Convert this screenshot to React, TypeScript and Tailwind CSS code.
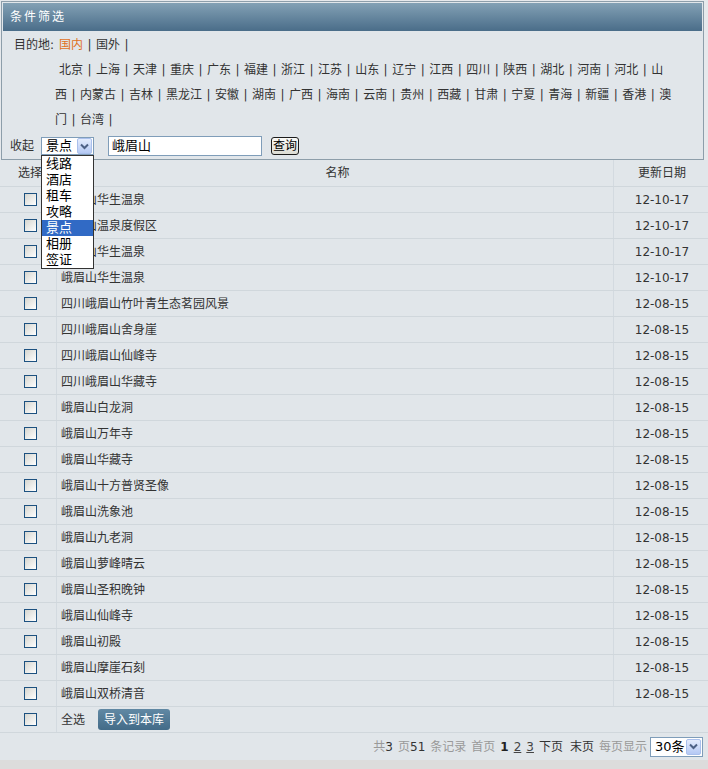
import React from "react";

const provinces = [
  "北京", "上海", "天津", "重庆", "广东", "福建", "浙江", "江苏", "山东", "辽宁", "江西", "四川",
  "陕西", "湖北", "河南", "河北", "山西", "内蒙古", "吉林", "黑龙江", "安徽", "湖南", "广西", "海南",
  "云南", "贵州", "西藏", "甘肃", "宁夏", "青海", "新疆", "香港", "澳门", "台湾",
];

const rows: [string, string][] = [
  ["峨眉山华生温泉", "12-10-17"],
  ["峨眉山温泉度假区", "12-10-17"],
  ["峨眉山华生温泉", "12-10-17"],
  ["峨眉山华生温泉", "12-10-17"],
  ["四川峨眉山竹叶青生态茗园风景", "12-08-15"],
  ["四川峨眉山舍身崖", "12-08-15"],
  ["四川峨眉山仙峰寺", "12-08-15"],
  ["四川峨眉山华藏寺", "12-08-15"],
  ["峨眉山白龙洞", "12-08-15"],
  ["峨眉山万年寺", "12-08-15"],
  ["峨眉山华藏寺", "12-08-15"],
  ["峨眉山十方普贤圣像", "12-08-15"],
  ["峨眉山洗象池", "12-08-15"],
  ["峨眉山九老洞", "12-08-15"],
  ["峨眉山萝峰晴云", "12-08-15"],
  ["峨眉山圣积晚钟", "12-08-15"],
  ["峨眉山仙峰寺", "12-08-15"],
  ["峨眉山初殿", "12-08-15"],
  ["峨眉山摩崖石刻", "12-08-15"],
  ["峨眉山双桥清音", "12-08-15"],
];

const options = ["线路", "酒店", "租车", "攻略", "景点", "相册", "签证"];

const Sep = () => <span className="inline-block w-[13px] text-center indent-0">|</span>;

const Checkbox = () => (
  <span className="block w-[13px] h-[13px] border border-[#1c5180] bg-linear-to-br from-[#d6d6d0] to-white" />
);

const Arrow = () => (
  <span className="flex items-center justify-center w-[15px] h-[16px] rounded-[2px] border border-[#aac0ec] bg-linear-to-b from-[#e4ecfd] to-[#b5c9f4]">
    <svg width="9" height="7" viewBox="0 0 9 7">
      <path d="M1 1.5 L4.5 5 L8 1.5" fill="none" stroke="#4d6185" strokeWidth="2" />
    </svg>
  </span>
);

export default function App() {
  return (
    <div
      className="w-[708px] h-[769px] bg-[#e6e9ec] text-[12px] text-[#333] overflow-hidden"
      style={{ fontFamily: '"DejaVu Sans", "Noto Sans CJK SC", sans-serif' }}
    >
      <div className="pt-px">
        {/* filter panel */}
        <div className="ml-px w-[703px] border border-[#8d9eaa] bg-[#e1e6ea]">
          <div className="m-px mb-0 h-[28px] flex items-center pl-[7px] text-white tracking-[2px] bg-linear-to-b from-[#83a1b5] to-[#4a6d89]">
            条件筛选
          </div>
          <div className="mt-[2px] h-[25px] leading-[25px] pl-[12px] whitespace-nowrap">
            <span className="inline-block w-[45px]">目的地:</span>
            <span className="text-[#e0701c]">国内</span>
            <Sep />
            <span>国外</span>
            <Sep />
          </div>
          <div className="ml-[53px] w-[617px] leading-[25px] indent-[4px]">
            {provinces.map((p) => (
              <React.Fragment key={p}>
                <span>{p}</span>
                <Sep />
              </React.Fragment>
            ))}
          </div>
          <div className="h-[26px] flex items-center pl-[8px]">
            <span>收起</span>
            <div className="relative ml-[7px] w-[53px] h-[18px] border border-[#7f9db9] bg-white flex items-center justify-between pl-[4px] pr-px text-[13px] text-black">
              <span>景点</span>
              <Arrow />
              <div className="absolute left-[-1px] top-[17px] z-10 w-[53px] border border-[#333] bg-white text-[13px] text-black">
                {options.map((o) => (
                  <div
                    key={o}
                    className={
                      o === "景点"
                        ? "h-[16px] leading-[16px] pl-[4px] bg-[#316ac5] text-white"
                        : "h-[16px] leading-[16px] pl-[4px]"
                    }
                  >
                    {o}
                  </div>
                ))}
              </div>
            </div>
            <div className="ml-[14px] w-[154px] h-[20px] border border-[#7f9db9] bg-white flex items-center pl-[3px] text-[13px] text-black">
              峨眉山
            </div>
            <button className="ml-[9px] w-[28px] h-[18px] p-0 rounded-[3px] border border-[#1c1c1c] bg-linear-to-b from-[#fbfbf8] to-[#dcdcd4] text-[12px] leading-none text-black whitespace-nowrap flex items-center justify-center">
              查询
            </button>
          </div>
        </div>

        {/* list */}
        <div className="bg-[#e1e6ea]">
          <div className="grid grid-cols-[57px_557px_94px] h-[27px] border-b border-[#d0d7dc]">
            <div className="border-r border-[#d3dae0] flex items-center justify-center pl-[4px]">选择</div>
            <div className="border-r border-[#d3dae0] flex items-center justify-center pl-[5px]">名称</div>
            <div className="flex items-center justify-center pl-[2px]">更新日期</div>
          </div>
          {rows.map(([name, date], i) => (
            <div key={i} className="grid grid-cols-[57px_557px_94px] h-[26px] border-b border-[#d0d7dc]">
              <div className="border-r border-[#d3dae0] flex items-center justify-center pl-[4px]">
                <Checkbox />
              </div>
              <div className="border-r border-[#d3dae0] flex items-center pl-[4px]">{name}</div>
              <div className="flex items-center justify-center pl-[2px]">{date}</div>
            </div>
          ))}
          <div className="grid grid-cols-[57px_651px] h-[26px] border-b border-[#d0d7dc]">
            <div className="border-r border-[#d3dae0] flex items-center justify-center pl-[4px]">
              <Checkbox />
            </div>
            <div className="flex items-center pl-[4px]">
              <span>全选</span>
              <button className="ml-[13px] h-[21px] px-[6px] rounded-[3px] bg-linear-to-b from-[#6189a4] to-[#436b88] text-white">
                导入到本库
              </button>
            </div>
          </div>
          <div className="h-[27px] flex items-center justify-end pr-[5px] text-[#999] whitespace-nowrap">
            <span>共</span>
            <span className="text-[#333]">3</span>
            <span className="ml-[5px]">页</span>
            <span className="text-[#333]">51</span>
            <span className="ml-[5px]">条记录</span>
            <span className="ml-[5px]">首页</span>
            <span className="ml-[5px] font-bold text-[#222]">1</span>
            <span className="ml-[5px] underline text-[#444]">2</span>
            <span className="ml-[5px] underline text-[#444]">3</span>
            <span className="ml-[5px] text-[#333]">下页</span>
            <span className="ml-[7px] text-[#333]">末页</span>
            <span className="ml-[5px]">每页显示</span>
            <div className="ml-[3px] w-[53px] h-[20px] border border-[#7f9db9] bg-white flex items-center justify-between pl-[4px] pr-px text-[13px] text-black">
              <span>30条</span>
              <Arrow />
            </div>
          </div>
        </div>
        <div className="h-[9px] bg-[#dcdcdc]" />
      </div>
    </div>
  );
}
